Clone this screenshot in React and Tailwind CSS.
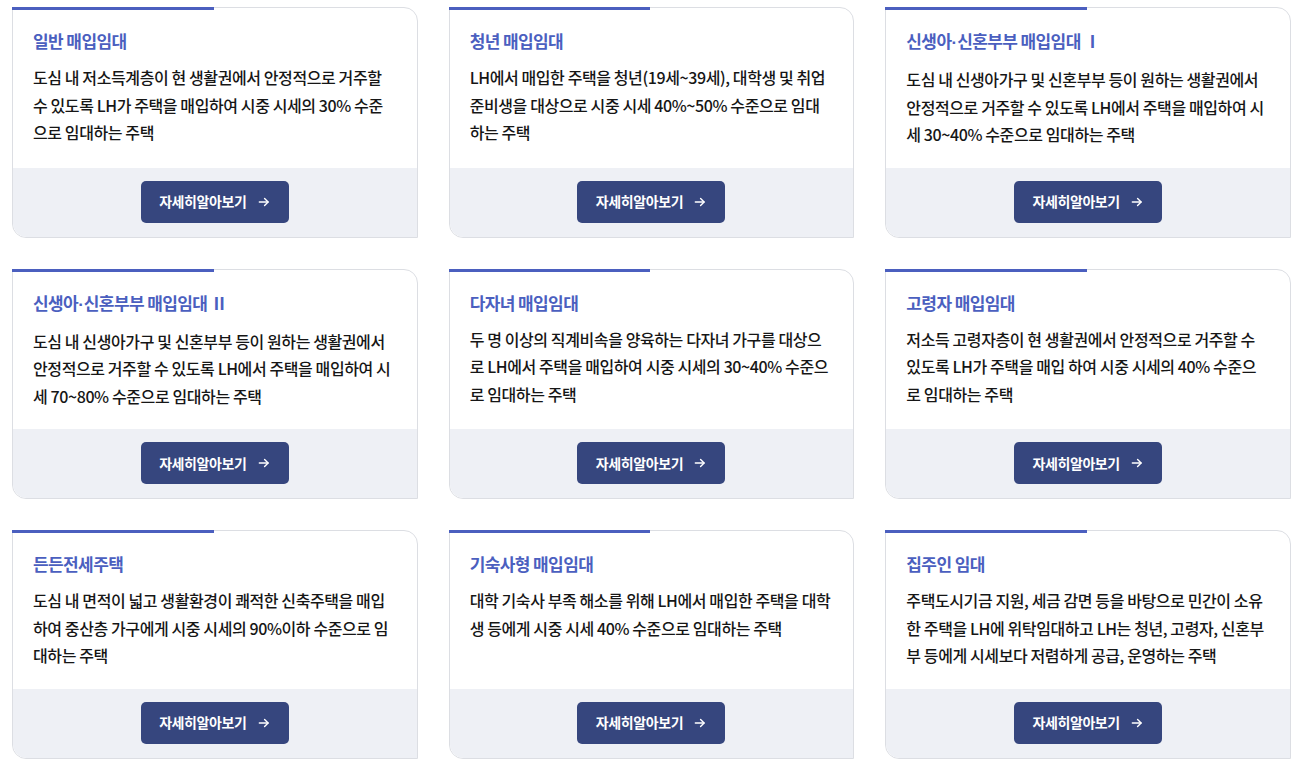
const items = [
  {
    title: '일반 매입임대',
    desc: '도심 내 저소득계층이 현 생활권에서 안정적으로 거주할 수 있도록 LH가 주택을 매입하여 시중 시세의 30% 수준으로 임대하는 주택',
  },
  {
    title: '청년 매입임대',
    desc: 'LH에서 매입한 주택을 청년(19세~39세), 대학생 및 취업 준비생을 대상으로 시중 시세 40%~50% 수준으로 임대하는 주택',
  },
  {
    title: '신생아·신혼부부 매입임대 Ⅰ',
    desc: '도심 내 신생아가구 및 신혼부부 등이 원하는 생활권에서 안정적으로 거주할 수 있도록 LH에서 주택을 매입하여 시세 30~40% 수준으로 임대하는 주택',
  },
  {
    title: '신생아·신혼부부 매입임대 Ⅱ',
    desc: '도심 내 신생아가구 및 신혼부부 등이 원하는 생활권에서 안정적으로 거주할 수 있도록 LH에서 주택을 매입하여 시세 70~80% 수준으로 임대하는 주택',
  },
  {
    title: '다자녀 매입임대',
    desc: '두 명 이상의 직계비속을 양육하는 다자녀 가구를 대상으로 LH에서 주택을 매입하여 시중 시세의 30~40% 수준으로 임대하는 주택',
  },
  {
    title: '고령자 매입임대',
    desc: '저소득 고령자층이 현 생활권에서 안정적으로 거주할 수 있도록 LH가 주택을 매입 하여 시중 시세의 40% 수준으로 임대하는 주택',
  },
  {
    title: '든든전세주택',
    desc: '도심 내 면적이 넓고 생활환경이 쾌적한 신축주택을 매입하여 중산층 가구에게 시중 시세의 90%이하 수준으로 임대하는 주택',
  },
  {
    title: '기숙사형 매입임대',
    desc: '대학 기숙사 부족 해소를 위해 LH에서 매입한 주택을 대학생 등에게 시중 시세 40% 수준으로 임대하는 주택',
  },
  {
    title: '집주인 임대',
    desc: '주택도시기금 지원, 세금 감면 등을 바탕으로 민간이 소유한 주택을 LH에 위탁임대하고 LH는 청년, 고령자, 신혼부부 등에게 시세보다 저렴하게 공급, 운영하는 주택',
  },
]

// middle dot is full-width in the CJK font, so set it in a latin face
function Title({ text }) {
  const parts = text.split('·')
  return (
    <h3 className="text-[17px] leading-[24px] font-bold tracking-[-0.6px] text-[#4b5fbf] mb-[11px]">
      {parts.map((p, i) => (
        <span key={i}>
          {i > 0 && <span className="font-['Liberation_Sans'] tracking-normal">·</span>}
          {p}
        </span>
      ))}
    </h3>
  )
}

function Card({ title, desc }) {
  return (
    <div className="relative flex flex-col border border-[#dcdee3] rounded-tr-[14px] rounded-bl-[14px] bg-white">
      {/* accent bar */}
      <span className="absolute -top-px -left-px w-1/2 h-[3px] bg-[#4b5fbf]" />
      <div className="flex-1 px-[20px] pt-[21px] pb-[19px]">
        <Title text={title} />
        <p className="text-[16px] leading-[27.5px] tracking-[-0.4px] font-medium text-[#161616]">{desc}</p>
      </div>
      <div className="flex justify-center bg-[#eef0f5] rounded-bl-[14px] pt-[13px] pb-[14px]">
        <button className="flex items-center gap-[10px] h-[42px] w-[148px] justify-center rounded-[5px] bg-[#36467e] text-white text-[14px] font-semibold tracking-[-0.4px]">
          자세히알아보기
          <svg className="w-[14px] h-[14px]" viewBox="0 0 24 24" fill="none" stroke="currentColor" strokeWidth="2.4" strokeLinecap="round" strokeLinejoin="round">
            <line x1="4" y1="12" x2="19" y2="12" />
            <polyline points="13 6 19 12 13 18" />
          </svg>
        </button>
      </div>
    </div>
  )
}

export default function App() {
  return (
    <div className="min-h-screen bg-white font-['Noto_Sans_CJK_KR','Noto_Sans',sans-serif]">
      <div className="grid grid-cols-3 gap-x-[31px] gap-y-[31px] w-[1279px] ml-[12px] pt-[7px]">
        {items.map(item => (
          <Card key={item.title} {...item} />
        ))}
      </div>
    </div>
  )
}
